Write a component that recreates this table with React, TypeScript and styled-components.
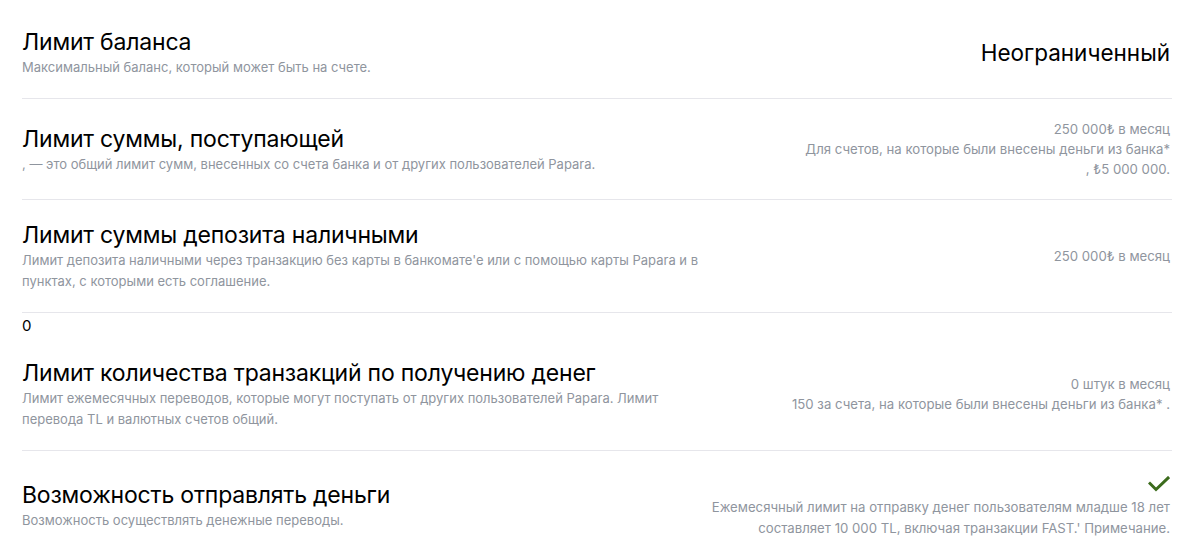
import React from "react";
import styled, { createGlobalStyle } from "styled-components";

const Global = createGlobalStyle`
  html, body { margin: 0; padding: 0; background: #fff; }
  body { font-family: Inter, "Noto Sans", Arial, sans-serif; -webkit-font-smoothing: antialiased; }
`;

const Page = styled.div`
  padding: 7px 28px 0 22px;
  width: 1200px;
  box-sizing: border-box;
`;

const Row = styled.div<{ $divider?: boolean }>`
  display: flex;
  align-items: center;
  justify-content: space-between;
  padding: 20px 0;
  border-bottom: ${(p) => (p.$divider ? "1px solid #e6e6eb" : "none")};
`;

const Left = styled.div`
  width: calc(60% - 10px);
  flex: none;
`;

const Title = styled.div`
  font-size: 23px;
  line-height: 30px;
  color: #000;
  font-weight: 400;
  letter-spacing: -0.2px;
`;

const Desc = styled.div`
  font-size: 13px;
  line-height: 21px;
  color: #8f959e;
`;

const Right = styled.div`
  flex: 1;
  min-width: 0;
  padding-right: 2px;
  display: flex;
  flex-direction: column;
  align-items: flex-end;
  text-align: right;
`;

const BigValue = styled.div`
  font-size: 22.5px;
  line-height: 30px;
  color: #000;
`;

const Value = styled.div`
  font-size: 13.2px;
  line-height: 20px;
  color: #8f959e;
`;

const Note = styled.div`
  font-size: 13.2px;
  line-height: 21px;
  color: #8f959e;
  max-width: 470px;
`;

const Zero = styled.div`
  font-size: 15px;
  line-height: 25px;
  color: #000;
`;

const CheckWrap = styled.div`
  height: 26px;
  display: flex;
  align-items: center;
`;

const Check = () => (
  <svg width="22" height="16" viewBox="0 0 22 16" fill="none">
    <path d="M2 7.5 L8 13.5 L20 2" stroke="#3b6b1c" strokeWidth="3" strokeLinecap="square" />
  </svg>
);

export default function App() {
  return (
    <>
      <Global />
      <Page>
        <Row $divider>
          <Left>
            <Title>Лимит баланса</Title>
            <Desc>Максимальный баланс, который может быть на счете.</Desc>
          </Left>
          <Right>
            <BigValue>Неограниченный</BigValue>
          </Right>
        </Row>
        <Row $divider>
          <Left>
            <Title>Лимит суммы, поступающей</Title>
            <Desc>, — это общий лимит сумм, внесенных со счета банка и от других пользователей Papara.</Desc>
          </Left>
          <Right>
            <Value>250 000₺ в месяц</Value>
            <Value>Для счетов, на которые были внесены деньги из банка*</Value>
            <Value>, ₺5 000 000.</Value>
          </Right>
        </Row>
        <Row $divider>
          <Left>
            <Title>Лимит суммы депозита наличными</Title>
            <Desc>
              Лимит депозита наличными через транзакцию без карты в банкомате'е или с помощью карты Papara и в
              пунктах, с которыми есть соглашение.
            </Desc>
          </Left>
          <Right>
            <Value>250 000₺ в месяц</Value>
          </Right>
        </Row>
        <Zero>0</Zero>
        <Row $divider>
          <Left>
            <Title>Лимит количества транзакций по получению денег</Title>
            <Desc>
              Лимит ежемесячных переводов, которые могут поступать от других пользователей Papara. Лимит
              перевода TL и валютных счетов общий.
            </Desc>
          </Left>
          <Right>
            <Value>0 штук в месяц</Value>
            <Value>150 за счета, на которые были внесены деньги из банка* .</Value>
          </Right>
        </Row>
        <Row>
          <Left>
            <Title>Возможность отправлять деньги</Title>
            <Desc>Возможность осуществлять денежные переводы.</Desc>
          </Left>
          <Right>
            <CheckWrap>
              <Check />
            </CheckWrap>
            <Note>
              Ежемесячный лимит на отправку денег пользователям младше 18 лет составляет 10 000 TL, включая
              транзакции FAST.' Примечание.
            </Note>
          </Right>
        </Row>
      </Page>
    </>
  );
}
